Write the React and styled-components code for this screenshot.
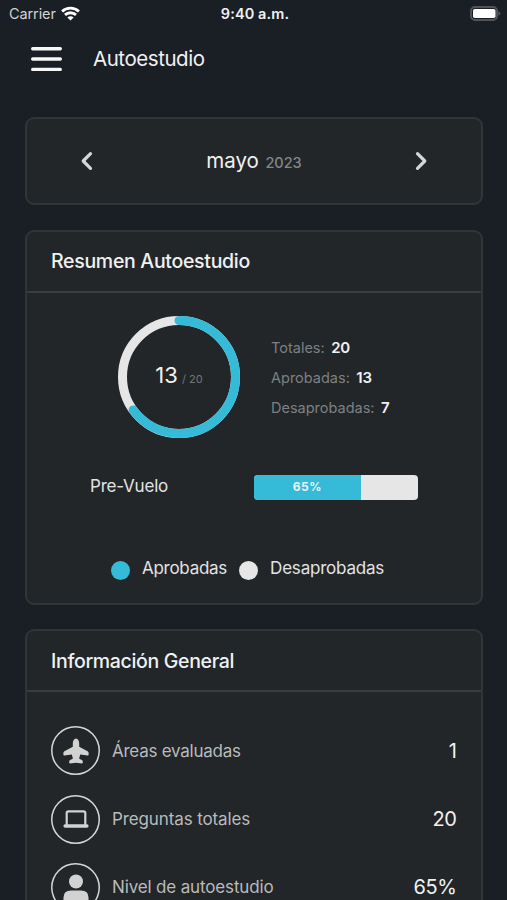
import React from "react";
import styled, { createGlobalStyle } from "styled-components";

const Global = createGlobalStyle`
  * { box-sizing: border-box; }
  html, body { margin: 0; height: 100%; overflow: hidden; background: #1a1e25; }
  body { font-family: Inter, "Liberation Sans", sans-serif; color: #f0f1f2; }
  svg { display: block; flex: none; }
`;

const Screen = styled.div`
  width: 507px;
  height: 900px;
  overflow: hidden;
  background: #1a1e25;
`;

const Text = styled.span`
  font-size: ${(p) => p.$size}px;
  font-weight: ${(p) => p.$weight || 400};
  letter-spacing: ${(p) => p.$track || 0}px;
  color: ${(p) => p.$color || "#f0f1f2"};
  line-height: 1.2;
  white-space: nowrap;
`;

const StatusBar = styled.header`
  display: grid;
  grid-template-columns: 1fr auto 1fr;
  align-items: center;
  height: 27px;
  padding: 0 6px 0 9px;
`;

const Signal = styled.div`
  display: flex;
  align-items: center;
  gap: 5px;
`;

const BatterySlot = styled.div`
  display: flex;
  justify-content: flex-end;
`;

const NavBar = styled.nav`
  display: flex;
  align-items: center;
  gap: 31px;
  height: 64px;
  padding-left: 31px;
`;

const Content = styled.main`
  display: flex;
  flex-direction: column;
  gap: 24.5px;
  padding: 26px 24px 0 25px;
`;

const Card = styled.section`
  flex: none;
  height: ${(p) => p.$height}px;
  border: 2px solid #303538;
  border-radius: 9px;
  background: #222628;
`;

const MonthPicker = styled(Card)`
  display: flex;
  align-items: center;
  justify-content: space-between;
  padding: 0 53px;
`;

const Month = styled.div`
  display: flex;
  align-items: baseline;
  gap: 6.5px;
  padding-top: 1px;
`;

const CardHeader = styled.div`
  display: flex;
  align-items: center;
  height: 61px;
  padding: 2px 24px 0;
  border-bottom: 2px solid #393d40;
`;

const Summary = styled.div`
  display: flex;
  align-items: center;
  gap: 31px;
  height: 169px;
  padding-left: 91px;
`;

const Ring = styled.div`
  display: grid;
  place-items: center;
  width: 122px;
  height: 122px;

  > * { grid-area: 1 / 1; }
`;

const RingLabel = styled.div`
  display: flex;
  align-items: baseline;
  gap: 4px;
  margin-top: -4px;
`;

const Stats = styled.div`
  display: grid;
  grid-auto-rows: 30px;
  align-items: center;
  padding-top: 2px;
`;

const Stat = styled.div`
  display: flex;
  align-items: center;
  gap: 6.5px;
`;

const TopicRow = styled.div`
  display: flex;
  align-items: center;
  justify-content: space-between;
  height: 50px;
  padding: 1px 63px 0;

  > :first-child { margin-top: -2px; }
`;

const Meter = styled.div`
  width: 164px;
  height: 25px;
  border-radius: 4px;
  overflow: hidden;
  background: #e6e6e6;
`;

const MeterFill = styled.div`
  display: flex;
  align-items: center;
  justify-content: center;
  height: 100%;
  background: #35bbd8;
`;

const Legend = styled.div`
  display: flex;
  align-items: center;
  gap: 12px;
  margin-top: 45px;
  padding-left: 84px;
  height: 24px;
`;

const LegendItem = styled.div`
  display: flex;
  align-items: center;
  gap: 12px;
`;

const Dot = styled.i`
  width: 19px;
  height: 19px;
  margin-top: 3px;
  border-radius: 50%;
  background: ${(p) => p.$color};
`;

const InfoList = styled.div`
  display: grid;
  grid-auto-rows: 68.4px;
  padding: 24.5px 24.5px 0 24px;
`;

const InfoRow = styled.div`
  display: flex;
  align-items: center;
  gap: 12px;

  > :last-child { margin-left: auto; }
`;

const IconCircle = styled.div`
  display: grid;
  place-items: center;
  width: 49px;
  height: 49px;
  border-radius: 50%;
  box-shadow: inset 0 0 0 1.5px #d6d6d6;
`;

const Wifi = () => (
  <svg width="19" height="15" viewBox="0 0 19 15" fill="none" stroke="#fff" strokeWidth="2.8">
    <path d="M1.100 5.500C5.800 1 13.200 1 17.900 5.500" />
    <path d="M4 8.900C7.200 6 11.800 6 15 8.900" />
    <path d="M6.400 11.400C8.200 9.800 10.800 9.800 12.600 11.400L9.500 14.500Z" fill="#fff" stroke="none" />
  </svg>
);

const Battery = () => (
  <svg width="31" height="15" viewBox="0 0 31 15">
    <rect x="1" y="1" width="26" height="13" rx="4" fill="none" stroke="#505357" strokeWidth="2" />
    <rect x="3" y="3" width="22.500" height="9" rx="1.800" fill="#fff" />
    <path d="M28.300 5.300Q30.500 6 30.500 7.500T28.300 9.700Z" fill="#505357" />
  </svg>
);

const Menu = () => (
  <svg width="31" height="26" viewBox="0 0 31 26" stroke="#f7f7f7" strokeWidth="3.400" strokeLinecap="round">
    <path d="M1.700 2.700H29.300M1.700 13H29.300M1.700 23.400H29.300" />
  </svg>
);

const Chevron = ({ flip }) => (
  <svg width="14" height="20" viewBox="0 0 14 20" fill="none" stroke="#d4d6d7" strokeWidth="3.200" strokeLinecap="round" strokeLinejoin="round">
    <path d={flip ? "M3.500 2.700 10.800 10 3.500 17.300" : "M10.500 2.700 3.200 10 10.500 17.300"} />
  </svg>
);

const Plane = () => (
  <svg width="26" height="26" viewBox="0 0 26 26" fill="#d2d2d2">
    <path d="M13 .6C11.200.6 9.800 3 9.800 5.500V8.700L1.400 13.300Q.4 13.900 .4 14.900V16.700Q.4 17.600 1.300 17.500L8.800 16.600 9.900 20.600 6.900 22.300Q6.200 22.800 6.200 23.600V24.600Q6.200 25.500 7.100 25.400L13 24.700 18.900 25.400Q19.800 25.500 19.800 24.600V23.600Q19.800 22.800 19.100 22.300L16.100 20.600 17.200 16.600 24.700 17.500Q25.600 17.600 25.600 16.700V14.900Q25.600 13.900 24.600 13.300L16.200 8.700V5.500C16.200 3 14.800.6 13 .6Z" />
  </svg>
);

const Laptop = () => (
  <svg width="26" height="20" viewBox="0 0 26 20" fill="none" stroke="#d2d2d2">
    <path d="M3.700 16V4Q3.700 2.300 5.400 2.300H20.600Q22.300 2.300 22.300 4V16" strokeWidth="2.200" />
    <path d="M2.200 17H23.800" strokeWidth="3.600" strokeLinecap="round" />
  </svg>
);

const Person = () => (
  <svg width="26" height="28" viewBox="0 0 26 28" fill="#d2d2d2">
    <circle cx="13" cy="8.500" r="7" />
    <path d="M.5 28V24.500Q.5 17.500 8 17.500H18Q25.500 17.500 25.500 24.500V28Z" />
  </svg>
);

const RADIUS = 56.5;
const LENGTH = 2 * Math.PI * RADIUS;

const stats = [
  ["Totales:", 20],
  ["Aprobadas:", 13],
  ["Desaprobadas:", 7],
];

const info = [
  { Icon: Plane, label: "Áreas evaluadas", value: "1", track: -0.25 },
  { Icon: Laptop, label: "Preguntas totales", value: "20", track: -0.12 },
  { Icon: Person, label: "Nivel de autoestudio", value: "65%", track: -0.15 },
];

export default function App() {
  return (
    <Screen>
      <Global />
      <StatusBar>
        <Signal>
          <Text $size={14.5} $color="#d0d2d4" $track={-0.1}>Carrier</Text>
          <Wifi />
        </Signal>
        <Text $size={14.5} $weight={600} $track={0.1}>9:40 a.m.</Text>
        <BatterySlot><Battery /></BatterySlot>
      </StatusBar>
      <NavBar>
        <Menu />
        <Text $size={20.5} $track={-0.45}>Autoestudio</Text>
      </NavBar>
      <Content>
        <MonthPicker $height={88}>
          <Chevron />
          <Month>
            <Text $size={20.5}>mayo</Text>
            <Text $size={14.5} $weight={500} $color="#83868a">2023</Text>
          </Month>
          <Chevron flip />
        </MonthPicker>
        <Card $height={375}>
          <CardHeader><Text $size={19.5} $weight={500} $track={-0.3}>Resumen Autoestudio</Text></CardHeader>
          <Summary>
            <Ring>
              <svg width="122" height="122" viewBox="0 0 122 122" fill="none" strokeWidth="9">
                <circle cx="61" cy="61" r={RADIUS} stroke="#e6e6e6" />
                <circle
                  cx="61" cy="61" r={RADIUS} stroke="#35bbd8" strokeLinecap="round"
                  strokeDasharray={`${LENGTH * 0.65} ${LENGTH}`} transform="rotate(-90 61 61)"
                />
              </svg>
              <RingLabel>
                <Text $size={22}>13</Text>
                <Text $size={11} $color="#74777a">/ 20</Text>
              </RingLabel>
            </Ring>
            <Stats>
              {stats.map(([label, value]) => (
                <Stat key={label}>
                  <Text $size={14.5} $color="#7d8082">{label}</Text>
                  <Text $size={15} $weight={600} $track={-0.2}>{value}</Text>
                </Stat>
              ))}
            </Stats>
          </Summary>
          <TopicRow>
            <Text $size={17} $track={-0.2} $color="#e2e3e4">Pre-Vuelo</Text>
            <Meter>
              <MeterFill style={{ width: "65%" }}>
                <Text $size={12} $weight={700} $track={0.5}>65%</Text>
              </MeterFill>
            </Meter>
          </TopicRow>
          <Legend>
            <LegendItem>
              <Dot $color="#35bbd8" />
              <Text $size={17} $track={-0.27} $color="#e2e3e4">Aprobadas</Text>
            </LegendItem>
            <LegendItem>
              <Dot $color="#e6e6e6" />
              <Text $size={17} $track={-0.2} $color="#e2e3e4">Desaprobadas</Text>
            </LegendItem>
          </Legend>
        </Card>
        <Card $height={400}>
          <CardHeader><Text $size={19.5} $weight={500} $track={-0.33}>Información General</Text></CardHeader>
          <InfoList>
            {info.map(({ Icon, label, value, track }) => (
              <InfoRow key={label}>
                <IconCircle><Icon /></IconCircle>
                <Text $size={17} $track={track} $color="#b9bbbc">{label}</Text>
                <Text $size={20} $track={-0.4}>{value}</Text>
              </InfoRow>
            ))}
          </InfoList>
        </Card>
      </Content>
    </Screen>
  );
}
